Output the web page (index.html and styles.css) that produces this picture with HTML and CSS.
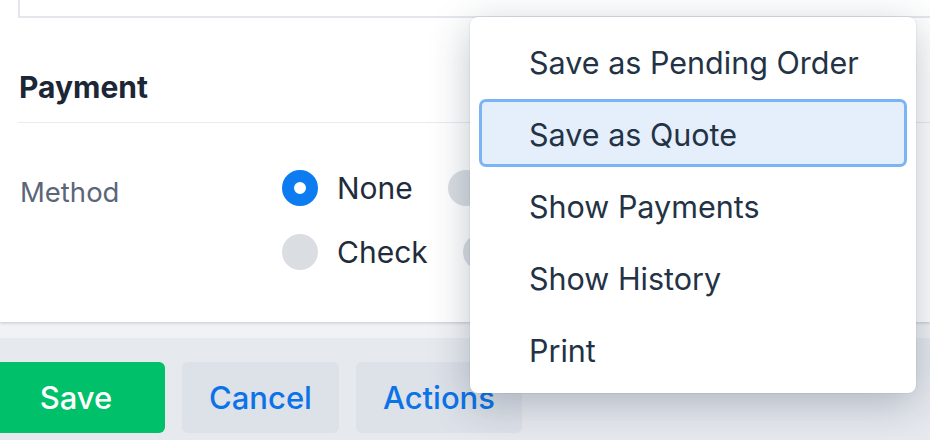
FILE: index.html
```html
<!DOCTYPE html>
<html lang="en">
<head>
<meta charset="utf-8">
<title>Payment</title>
<link rel="stylesheet" href="styles.css">
</head>
<body>
<div class="page">
  <div class="card">
    <div class="field-box"></div>
    <h2 class="section-title">Payment</h2>
    <div class="method-row">
      <div class="method-label">Method</div>
      <div class="radio-group">
        <div class="radio-line">
          <label class="radio"><span class="dot checked"></span><span class="radio-text">None</span></label>
          <label class="radio"><span class="dot"></span><span class="radio-text">Credit Card</span></label>
          <label class="radio"><span class="dot"></span><span class="radio-text">Voucher</span></label>
        </div>
        <div class="radio-line">
          <label class="radio"><span class="dot"></span><span class="radio-text">Check</span></label>
          <label class="radio"><span class="dot"></span><span class="radio-text">Cash</span></label>
        </div>
      </div>
    </div>
  </div>
  <div class="gap-strip"></div>
  <div class="footer">
    <button class="btn btn-save">Save</button>
    <button class="btn btn-light">Cancel</button>
    <button class="btn btn-light">Actions</button>
  </div>
  <ul class="menu">
    <li class="menu-item">Save as Pending Order</li>
    <li class="menu-item active">Save as Quote</li>
    <li class="menu-item">Show Payments</li>
    <li class="menu-item">Show History</li>
    <li class="menu-item">Print</li>
  </ul>
</div>
</body>
</html>
```
FILE: styles.css
```css
* { box-sizing: border-box; }
html, body { margin: 0; padding: 0; }
body {
  width: 930px;
  height: 440px;
  overflow: hidden;
  font-family: Inter, "Noto Sans", sans-serif;
  background: #e6e9ee;
}
.page {
  position: relative;
  width: 930px;
  height: 440px;
  display: flex;
  flex-direction: column;
}
.card {
  background: #ffffff;
  height: 322px;
  box-shadow: 0 1px 3px rgba(40, 55, 75, 0.22);
  position: relative;
  z-index: 1;
  display: flex;
  flex-direction: column;
  padding-left: 18px;
}
.field-box {
  height: 18px;
  border-left: 2px solid #e3e7ec;
  border-bottom: 2px solid #e3e7ec;
}
.section-title {
  margin: 0;
  padding: 51px 0 17px 1px;
  line-height: 36px;
  font-size: 30px;
  font-weight: 700;
  color: #1b2636;
  border-bottom: 1.5px solid #e8ebef;
}
.method-row {
  display: flex;
  padding-top: 47px;
}
.method-label {
  width: 264px;
  padding: 4px 0 0 2px;
  line-height: 36px;
  font-size: 27.5px;
  color: #5b6678;
}
.radio-group {
  display: flex;
  flex-direction: column;
  gap: 28px;
}
.radio-line {
  display: flex;
  gap: 35px;
}
.radio {
  display: flex;
  align-items: center;
  gap: 19px;
  white-space: nowrap;
}
.dot {
  width: 36px;
  height: 36px;
  border-radius: 50%;
  background: #dadee3;
  flex: none;
}
.dot.checked {
  background: #ffffff;
  border: 12px solid #0d7cf0;
}
.radio-text {
  font-size: 30px;
  line-height: 34px;
  color: #1f2c3c;
}
.gap-strip {
  height: 16px;
  background: #f0f2f5;
}
.footer {
  flex: 1;
  background: #e6e9ee;
  display: flex;
  gap: 17px;
  padding: 24px 0 0 0;
  margin-left: -13px;
}
.btn {
  height: 71px;
  border: 0;
  border-radius: 6px;
  padding: 0 27px;
  font-family: inherit;
  font-size: 31px;
  font-weight: 500;
}
.btn-save {
  width: 178px;
  background: #00c16a;
  color: #ffffff;
}
.btn-light {
  background: #dde1e8;
  color: #0b73e8;
}
.menu {
  position: absolute;
  left: 470px;
  top: 17px;
  width: 446px;
  height: 376px;
  margin: 0;
  padding: 10px 9px;
  list-style: none;
  background: #ffffff;
  border-radius: 8px;
  box-shadow: 0 10px 40px rgba(30, 45, 70, 0.28), 0 0 0 1px rgba(30, 45, 70, 0.05);
  z-index: 5;
  display: flex;
  flex-direction: column;
  gap: 4px;
}
.menu-item {
  height: 68px;
  display: flex;
  align-items: center;
  padding: 2px 0 0 47px;
  font-size: 30.5px;
  color: #233345;
  border: 3px solid transparent;
  border-radius: 7px;
}
.menu-item.active {
  background: #e5effc;
  border-color: #7bb4f5;
}
```
